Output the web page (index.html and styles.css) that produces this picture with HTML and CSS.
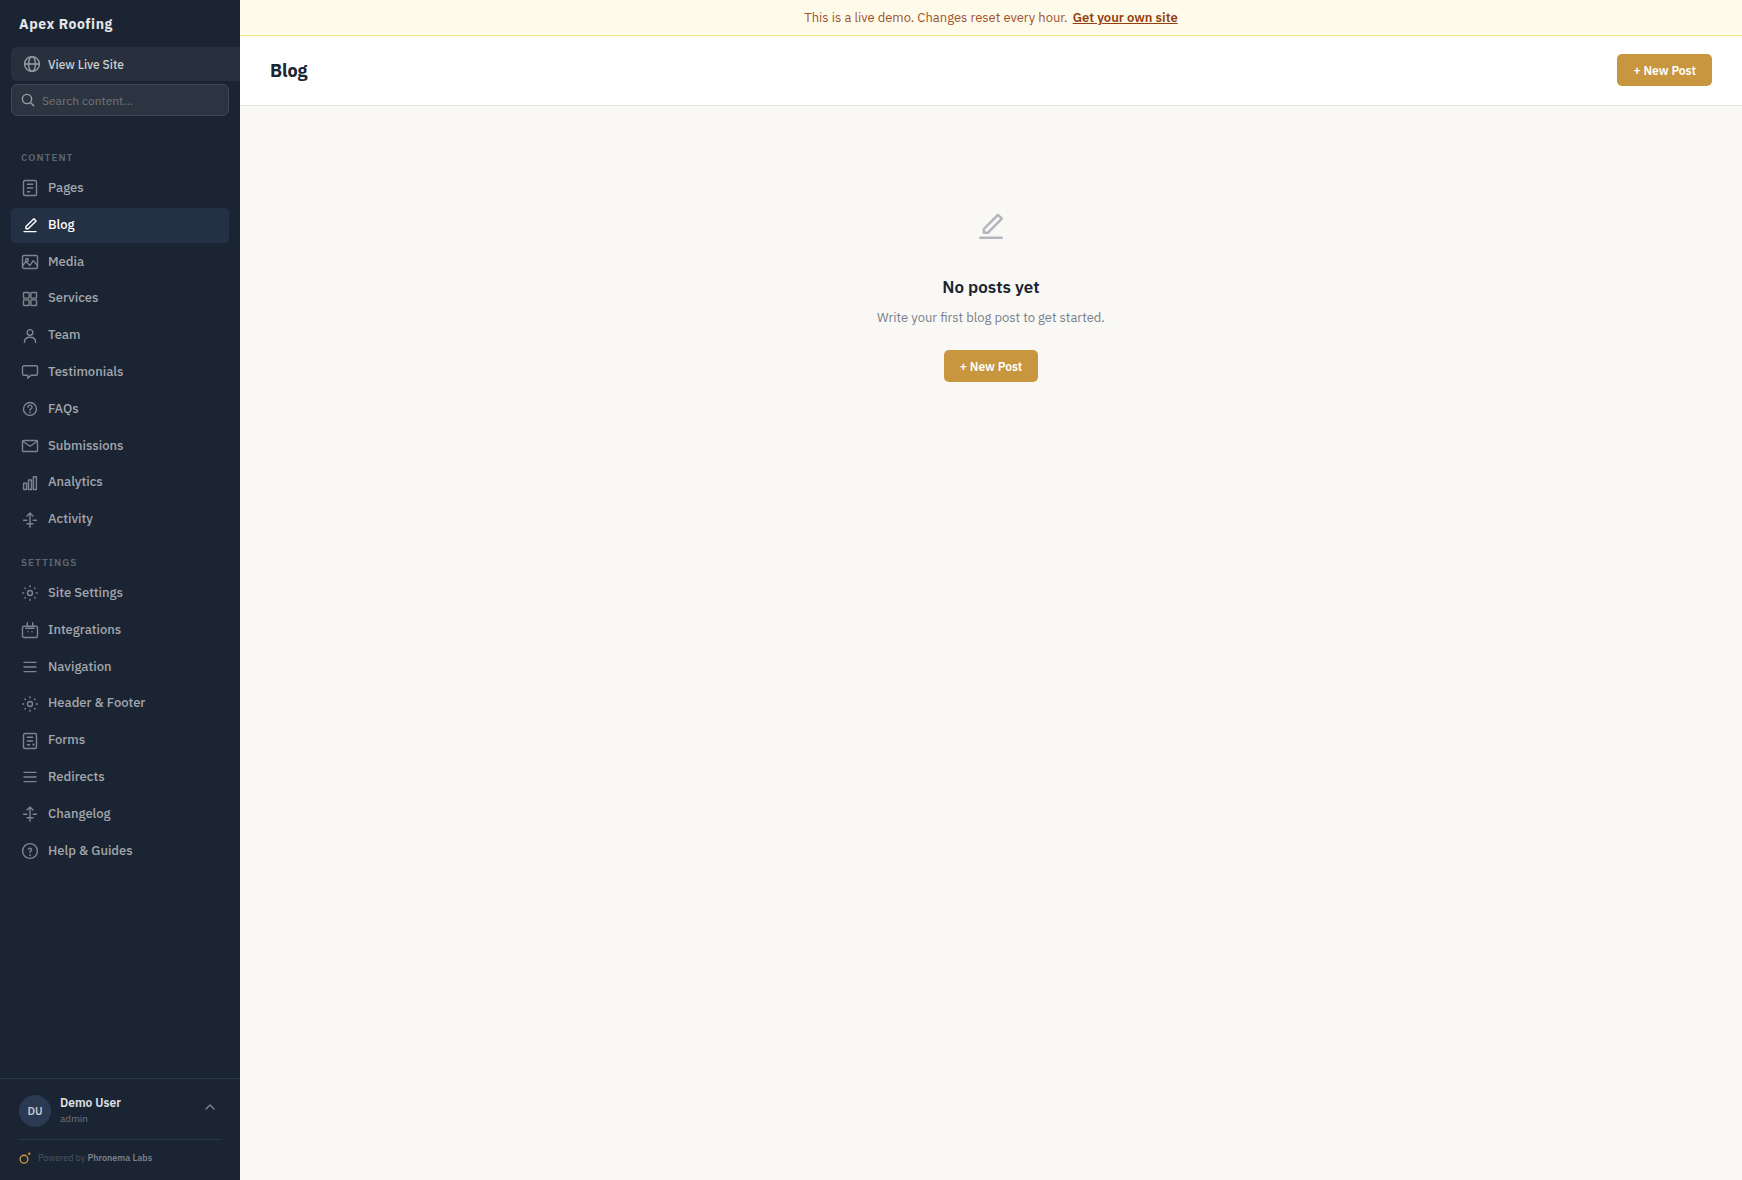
FILE: index.html
```html
<!DOCTYPE html>
<html lang="en">
<head>
  <meta charset="UTF-8">
  <meta name="viewport" content="width=device-width, initial-scale=1.0">
  <title>Blog - Apex Roofing</title>
  <link rel="stylesheet" href="styles.css">
</head>
<body>
  <!-- Icon sprite -->
  <svg class="sprite" aria-hidden="true">
    <symbol id="i-globe" viewBox="0 0 18 18"><circle cx="9" cy="9" r="7.4"/><ellipse cx="9" cy="9" rx="3.4" ry="7.4"/><path d="M1.6 9h14.8"/></symbol>
    <symbol id="i-page" viewBox="0 0 18 18"><rect x="2.5" y="1.5" width="13" height="15" rx="1.5"/><path d="M6.4 5.3h5.2M6.4 9h5.2M6.4 12.7h2.2"/></symbol>
    <symbol id="i-pen" viewBox="0 0 18 18"><path d="M12.9 2.7l2.2 2.2-7.9 7.9H5v-2.2zM3 15.6h12"/></symbol>
    <symbol id="i-media" viewBox="0 0 18 18"><rect x="1.5" y="2.5" width="15" height="13" rx="1.5"/><circle cx="6" cy="6.9" r="1.4"/><path d="M1.5 13l3.3-4.6 4.2 4 3.2-4.8 4.3 4.9"/></symbol>
    <symbol id="i-grid" viewBox="0 0 18 18"><rect x="2.5" y="2.5" width="5.6" height="5.6" rx=".6"/><rect x="9.9" y="2.5" width="5.6" height="5.6" rx=".6"/><rect x="2.5" y="9.9" width="5.6" height="5.6" rx=".6"/><rect x="9.9" y="9.9" width="5.6" height="5.6" rx=".6"/></symbol>
    <symbol id="i-user" viewBox="0 0 18 18"><circle cx="9" cy="5.4" r="2.8"/><path d="M3.4 15.4c0-3.3 2.2-5.2 5.6-5.2s5.6 1.9 5.6 5.2"/></symbol>
    <symbol id="i-chat" viewBox="0 0 18 18"><path d="M3 2.8h12a1.5 1.5 0 0 1 1.5 1.5v6.4a1.5 1.5 0 0 1-1.5 1.5h-5l-3.2 3v-3H3a1.5 1.5 0 0 1-1.5-1.5V4.3A1.5 1.5 0 0 1 3 2.8z"/></symbol>
    <symbol id="i-faq" viewBox="0 0 18 18"><circle cx="9" cy="9" r="6.5"/><path d="M7 7.2a2 2 0 1 1 2.9 1.7c-.6.3-.9.6-.9 1.3"/><circle class="dot" cx="9" cy="12.4" r=".9"/></symbol>
    <symbol id="i-mail" viewBox="0 0 18 18"><rect x="1.5" y="3.5" width="15" height="11" rx="1"/><path d="M1.8 4.2L9 9.2l7.2-5"/></symbol>
    <symbol id="i-chart" viewBox="0 0 18 18"><path d="M2.6 9.3h3v6.2h-3zM7.5 6h3v9.5h-3zM12.4 2.7h3v12.8h-3z"/></symbol>
    <symbol id="i-activity" viewBox="0 0 18 18"><path d="M9 2v14.3M6 4.9L9 2l3 2.9M2.6 9.2h3.2M12.2 9.2h3.2M6 12.8h6"/></symbol>
    <symbol id="i-gear" viewBox="0 0 18 18"><circle cx="9" cy="9" r="2.5"/><path d="M9 1.7v1M9 15.3v1M1.7 9h1M15.3 9h1M4 4l.4.4M13.6 13.6l.4.4M4 14l.4-.4M13.6 4.4l.4-.4"/></symbol>
    <symbol id="i-plug" viewBox="0 0 18 18"><rect x="1.5" y="5.2" width="15" height="11.3" rx="1.6"/><path d="M6.3 1.8v3.4M11.7 1.8v3.4M4.8 7.3h8.4"/><circle class="dot" cx="7" cy="10.8" r=".8"/><circle class="dot" cx="11" cy="10.8" r=".8"/></symbol>
    <symbol id="i-menu" viewBox="0 0 18 18"><path d="M3 4.4h12M3 9h12M3 13.6h12"/></symbol>
    <symbol id="i-form" viewBox="0 0 18 18"><rect x="2.5" y="1.5" width="13" height="15" rx="1.5"/><path d="M6.4 5.3h5.2M6.4 9h5.2M6.4 12.7h2.2"/><circle class="dot" cx="12.5" cy="12.7" r="1.1"/></symbol>
    <symbol id="i-help" viewBox="0 0 18 18"><circle cx="9" cy="9" r="7.4"/><path d="M7.4 7.4c.3-.9 1-1.2 1.8-1.1 1.1.1 1.7 1.2 1.1 2.1-.4.6-1.3.8-1.3 2"/><circle class="dot" cx="9" cy="13.2" r=".9"/></symbol>
    <symbol id="i-search" viewBox="0 0 14 14"><circle cx="6" cy="6" r="4.6"/><path d="M9.4 9.4l3.4 3.4"/></symbol>
    <symbol id="i-up" viewBox="0 0 12 12"><path d="M2 8l4-4 4 4"/></symbol>
    <symbol id="i-phronema" viewBox="0 0 12 12"><circle cx="5" cy="7.2" r="3.9"/><circle class="dot" cx="10.2" cy="1.8" r="1.2"/></symbol>
  </svg>

  <div class="layout">
    <aside class="sidebar">
      <div class="brand">Apex Roofing</div>
      <a class="live-link" href="#"><svg class="icon"><use href="#i-globe"/></svg>View Live Site</a>
      <label class="search">
        <svg class="icon icon-search"><use href="#i-search"/></svg>
        <input type="search" placeholder="Search content..." aria-label="Search content">
      </label>

      <nav class="nav">
        <div class="nav-label">Content</div>
        <a class="nav-item" href="#"><svg class="icon"><use href="#i-page"/></svg>Pages</a>
        <a class="nav-item active" href="#" aria-current="page"><svg class="icon"><use href="#i-pen"/></svg>Blog</a>
        <a class="nav-item" href="#"><svg class="icon"><use href="#i-media"/></svg>Media</a>
        <a class="nav-item" href="#"><svg class="icon"><use href="#i-grid"/></svg>Services</a>
        <a class="nav-item" href="#"><svg class="icon"><use href="#i-user"/></svg>Team</a>
        <a class="nav-item" href="#"><svg class="icon"><use href="#i-chat"/></svg>Testimonials</a>
        <a class="nav-item" href="#"><svg class="icon"><use href="#i-faq"/></svg>FAQs</a>
        <a class="nav-item" href="#"><svg class="icon"><use href="#i-mail"/></svg>Submissions</a>
        <a class="nav-item" href="#"><svg class="icon"><use href="#i-chart"/></svg>Analytics</a>
        <a class="nav-item" href="#"><svg class="icon"><use href="#i-activity"/></svg>Activity</a>

        <div class="nav-label">Settings</div>
        <a class="nav-item" href="#"><svg class="icon"><use href="#i-gear"/></svg>Site Settings</a>
        <a class="nav-item" href="#"><svg class="icon"><use href="#i-plug"/></svg>Integrations</a>
        <a class="nav-item" href="#"><svg class="icon"><use href="#i-menu"/></svg>Navigation</a>
        <a class="nav-item" href="#"><svg class="icon"><use href="#i-gear"/></svg>Header &amp; Footer</a>
        <a class="nav-item" href="#"><svg class="icon"><use href="#i-form"/></svg>Forms</a>
        <a class="nav-item" href="#"><svg class="icon"><use href="#i-menu"/></svg>Redirects</a>
        <a class="nav-item" href="#"><svg class="icon"><use href="#i-activity"/></svg>Changelog</a>
        <a class="nav-item" href="#"><svg class="icon"><use href="#i-help"/></svg>Help &amp; Guides</a>
      </nav>

      <div class="sidebar-footer">
        <button class="user" type="button">
          <span class="avatar">DU</span>
          <span class="user-info">
            <span class="user-name">Demo User</span>
            <span class="user-role">admin</span>
          </span>
          <svg class="icon icon-up"><use href="#i-up"/></svg>
        </button>
        <div class="powered">
          <svg class="icon icon-logo"><use href="#i-phronema"/></svg>
          <span>Powered by <a href="#">Phronema Labs</a></span>
        </div>
      </div>
    </aside>

    <div class="content">
      <div class="demo-bar">This is a live demo. Changes reset every hour. <a href="#">Get your own site</a></div>
      <header class="topbar">
        <h1>Blog</h1>
        <button class="btn" type="button">+ New Post</button>
      </header>
      <main class="empty">
        <svg class="icon icon-empty"><use href="#i-pen"/></svg>
        <h2>No posts yet</h2>
        <p>Write your first blog post to get started.</p>
        <button class="btn" type="button">+ New Post</button>
      </main>
    </div>
  </div>
</body>
</html>
```
FILE: styles.css
```css
:root {
  --navy: #1b2432;
  --navy-active: #243044;
  --navy-line: #2a3a4e;
  --gold: #c8963e;
  --page: #f9f8f4;
  --muted: #7a7f8c;
}

* {
  box-sizing: border-box;
}

body {
  margin: 0;
  font-family: "IBM Plex Sans", Roboto, "Liberation Sans", sans-serif;
  font-size: 13px;
  line-height: 21px;
  color: var(--navy);
  background: var(--page);
}

button,
input {
  font: inherit;
}

h1, h2, p {
  margin: 0;
}

.sprite {
  position: absolute;
  width: 0;
  height: 0;
}

.icon {
  flex: none;
  width: 18px;
  height: 18px;
  fill: none;
  stroke: currentColor;
  stroke-width: 1.4;
  stroke-linecap: round;
  stroke-linejoin: round;
}

.dot {
  fill: currentColor;
  stroke: none;
}

.layout {
  display: flex;
  min-height: 100vh;
}

/* Sidebar */
.sidebar {
  display: flex;
  flex-direction: column;
  flex: none;
  width: 240px;
  background: var(--navy);
}

.brand {
  padding: 14px 19px 12px;
  font-size: 14px;
  font-weight: 700;
  letter-spacing: 0.04em;
  color: #e4e6e9;
}

.live-link {
  display: flex;
  align-items: center;
  gap: 7px;
  height: 34px;
  margin-left: 11px;
  padding: 0 12px;
  border-radius: 6px 0 0 6px;
  background: #28303e;
  color: #cccfd3;
  font-size: 12px;
  font-weight: 500;
  text-decoration: none;
}

.live-link .icon {
  color: #9a9fa7;
}

.search {
  display: flex;
  align-items: center;
  gap: 7px;
  height: 32px;
  margin: 3px 11px 0;
  padding: 0 9px;
  border: 1px solid #3f4754;
  border-radius: 6px;
  background: #2d3441;
  font-size: 12px;
}

.icon-search {
  width: 14px;
  height: 14px;
  color: #9a9fa7;
}

.search input {
  flex: 1;
  min-width: 0;
  padding: 0;
  border: 0;
  outline: 0;
  background: none;
  color: #fff;
}

.search input::placeholder {
  color: #757575;
}

.nav {
  display: flex;
  flex-direction: column;
  gap: 2px;
  flex: 1;
  padding: 18px 11px 16px;
}

.nav-label {
  padding: 13px 10px 1px;
  font-size: 10px;
  font-weight: 600;
  letter-spacing: 1px;
  text-transform: uppercase;
  color: #5f6670;
}

.nav-item {
  display: flex;
  align-items: center;
  gap: 9px;
  padding: 7px 10px;
  border-radius: 5px;
  color: #a4a7ad;
  font-weight: 500;
  line-height: 1.6;
  text-decoration: none;
}

.nav-item .icon {
  color: #7f858e;
}

.nav-item.active,
.nav-item.active .icon {
  color: #fff;
}

.nav-item.active {
  background: var(--navy-active);
}

.sidebar-footer {
  padding: 16px 19px 12px;
  border-top: 1px solid var(--navy-line);
}

.user {
  display: flex;
  align-items: center;
  gap: 9px;
  width: 100%;
  padding: 0 5px 12px 0;
  border: 0;
  border-bottom: 1px solid var(--navy-line);
  background: none;
  text-align: left;
  cursor: pointer;
}

.avatar {
  display: flex;
  align-items: center;
  justify-content: center;
  width: 32px;
  height: 32px;
  border-radius: 50%;
  background: #2b3a52;
  color: #c4c8ce;
  font-size: 11px;
  font-weight: 600;
}

.user-info {
  display: flex;
  flex-direction: column;
  flex: 1;
  line-height: 16px;
}

.user-name {
  color: #e0e2e5;
  font-size: 12px;
  font-weight: 600;
}

.user-role {
  color: #6f757f;
  font-size: 10px;
}

.icon-up {
  width: 12px;
  height: 12px;
  margin-bottom: 8px;
  color: #7f858e;
}

.powered {
  display: flex;
  align-items: center;
  gap: 7px;
  padding-top: 7px;
  font-size: 9px;
  color: #4c5562;
}

.powered a {
  color: #7b818a;
  font-weight: 600;
  text-decoration: none;
}

.icon-logo {
  width: 12px;
  height: 12px;
  color: var(--gold);
}

/* Main column */
.content {
  flex: 1;
  min-width: 0;
}

.demo-bar {
  padding: 7px 16px;
  border-bottom: 1px solid #fae68c;
  background: #fffbeb;
  color: #a0522d;
  text-align: center;
}

.demo-bar a {
  margin-left: 2px;
  color: #92400e;
  font-weight: 600;
}

.topbar {
  display: flex;
  align-items: center;
  justify-content: space-between;
  padding: 18px 30px 19px;
  border-bottom: 1px solid #e5e5e0;
  background: #fff;
}

.topbar h1 {
  font-size: 18px;
  font-weight: 700;
}

.btn {
  height: 32px;
  padding: 0 16px;
  border: 0;
  border-radius: 5px;
  background: var(--gold);
  color: #fff;
  font-size: 12px;
  font-weight: 600;
  cursor: pointer;
}

.empty {
  display: flex;
  flex-direction: column;
  align-items: center;
  padding: 104px 20px 60px;
}

.icon-empty {
  width: 32px;
  height: 32px;
  margin-bottom: 33px;
  color: #b3b5bf;
}

.empty h2 {
  margin-bottom: 8px;
  font-size: 17px;
  line-height: 24px;
  font-weight: 600;
}

.empty p {
  margin-bottom: 22px;
  color: var(--muted);
}
```
